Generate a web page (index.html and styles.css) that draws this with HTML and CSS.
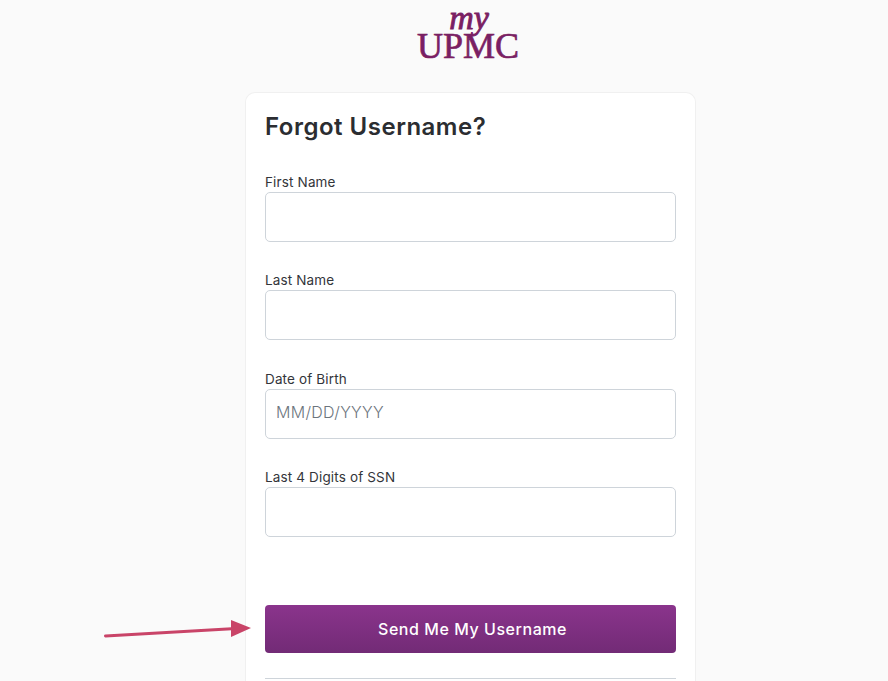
FILE: index.html
```html
<!DOCTYPE html>
<html lang="en">
<head>
    <meta charset="UTF-8">
    <meta name="viewport" content="width=device-width, initial-scale=1.0">
    <title>Forgot Username</title>
    <link rel="stylesheet" href="styles.css">
</head>
<body>
    <header class="logo">
        <span class="logo-my">my</span>
        <span class="logo-upmc">UPMC</span>
    </header>

    <main class="card">
        <h1>Forgot Username?</h1>
        <form class="fields">
            <div class="field">
                <label for="first-name">First Name</label>
                <input id="first-name" type="text">
            </div>
            <div class="field">
                <label for="last-name">Last Name</label>
                <input id="last-name" type="text">
            </div>
            <div class="field">
                <label for="dob">Date of Birth</label>
                <input id="dob" type="text" placeholder="MM/DD/YYYY">
            </div>
            <div class="field">
                <label for="ssn">Last 4 Digits of SSN</label>
                <input id="ssn" type="text">
            </div>
            <button type="button" class="submit-btn">Send Me My Username</button>
        </form>
        <hr class="divider">
    </main>

    <!-- annotation arrow over the page -->
    <svg class="arrow" width="160" height="24" viewBox="0 0 160 24">
        <line x1="1.5" y1="16" x2="132" y2="8.5" stroke="#c94468" stroke-width="3" stroke-linecap="round"/>
        <polygon points="127,0 147,8 127,17" fill="#c94468"/>
    </svg>
</body>
</html>
```

FILE: styles.css
```css
html, body {
    height: 681px;
    overflow: hidden;
}

body {
    margin: 0;
    background: #fafafa;
    color: #2b2d31;
    font-family: Inter, "Open Sans", sans-serif;
}

/* Logo */
.logo {
    height: 92px;
    margin-left: 400px;
    width: 136px;
    display: flex;
    flex-direction: column;
    align-items: center;
    color: #7a1f63;
    box-sizing: border-box;
    padding-top: 6px;
}

.logo-my {
    font-family: "Liberation Serif", serif;
    font-style: italic;
    font-size: 34px;
    line-height: 24px;
    height: 24px;
    margin-left: 2px;
    -webkit-text-stroke: 0.9px #7a1f63;
}

.logo-upmc {
    font-family: "Liberation Serif", serif;
    font-size: 36px;
    line-height: 30px;
    margin-top: 1px;
    -webkit-text-stroke: 0.7px #7a1f63;
}

/* Card runs off the bottom of the window */
.card {
    width: 451px;
    height: 589px;
    box-sizing: border-box;
    margin-left: 245px;
    padding: 20px 19px 0;
    background: #fff;
    border: 1px solid #f0f0f0;
    border-bottom: none;
    border-radius: 10px 10px 0 0;
}

.card h1 {
    margin: 0;
    font-size: 24px;
    line-height: 28px;
    font-weight: 600;
    letter-spacing: 0.5px;
}

.fields {
    display: flex;
    flex-direction: column;
    margin-top: 32px;
}

.field {
    display: flex;
    flex-direction: column;
    margin-bottom: 29.3px;
}

.field label {
    font-size: 13.5px;
    line-height: 18px;
    height: 19px;
    letter-spacing: 0.15px;
    color: #33353a;
}

.field input {
    height: 50px;
    box-sizing: border-box;
    padding: 0 10px 3px;
    border: 1px solid #ced4da;
    border-radius: 5px;
    background: #fff;
    font-family: inherit;
    font-size: 16px;
    font-weight: 300;
    letter-spacing: 0.3px;
}

.field input::placeholder {
    color: #6c757d;
    opacity: 1;
}

.submit-btn {
    height: 48px;
    margin-top: 39px;
    padding: 0 0 0 4px;
    border: none;
    border-radius: 4px;
    background: linear-gradient(#8a348c, #722b76);
    color: #fff;
    font-family: inherit;
    font-size: 16px;
    font-weight: 500;
    letter-spacing: 0.55px;
}

.divider {
    margin: 25px 0 0;
    border: none;
    border-top: 1px solid #ced4da;
}

.arrow {
    position: absolute;
    left: 104px;
    top: 620px;
}
```
